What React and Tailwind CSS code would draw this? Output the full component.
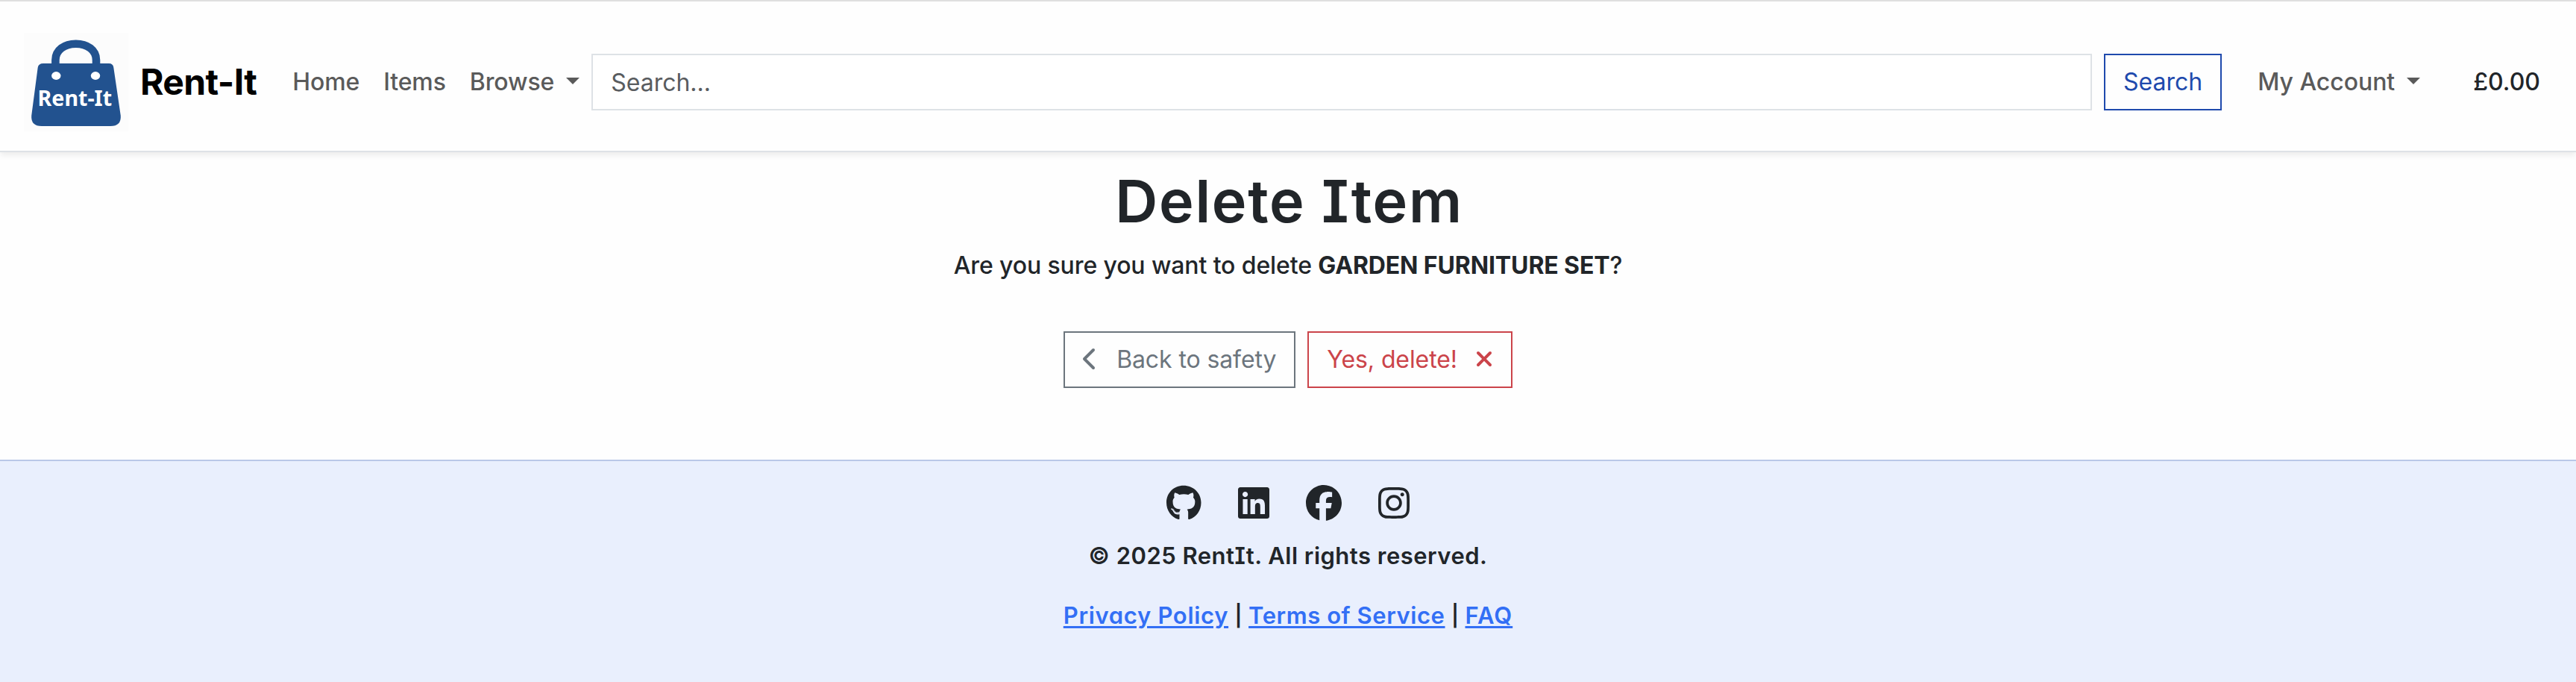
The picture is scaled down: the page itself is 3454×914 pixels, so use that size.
import React from "react";
import { FaGithub, FaLinkedin, FaFacebook, FaInstagram, FaChevronLeft, FaXmark } from "react-icons/fa6";

function Logo() {
  return (
    <svg viewBox="0 0 140 132" className="h-[132px] w-[140px] shrink-0 bg-[#fcfcfc]">
      <path d="M42.4 44V36.5C42.4 23 54.5 14.8 69.7 14.8S97 23 97 36.5V44" fill="none" stroke="#22528f" strokeWidth="10.6" />
      <path d="M26 41H114Q119.6 41 120.3 46.5L129.8 111Q130.8 125 116 125H24Q9.2 125 10.2 111L18.7 46.5Q19.6 41 26 41Z" fill="#22528f" />
      <ellipse cx="43.3" cy="57.5" rx="6.2" ry="5.4" fill="#fff" />
      <ellipse cx="96" cy="57.5" rx="6.2" ry="5.4" fill="#fff" />
      <text x="18.6" y="97.8" textLength="99.5" lengthAdjust="spacingAndGlyphs" fill="#fff" className="font-['Noto_Sans',sans-serif] text-[28.5px] font-bold">Rent-It</text>
    </svg>
  );
}

function Caret() {
  return <span className="-mt-[3px] h-0 w-0 border-x-[9.6px] border-t-[9.6px] border-x-transparent border-t-[#5a5a5a]" />;
}

function Navbar() {
  return (
    <nav className="flex h-[204px] items-center border-t-2 border-b-2 border-t-[#dfdfdf] border-b-[#dee2e6] bg-[#fefefe] pt-4 pr-12 pl-8 font-medium text-[#5a5a5a] shadow-[0_4px_8px_rgba(0,0,0,0.075)]">
      <a className="flex items-center gap-4 text-5xl font-bold text-black">
        <Logo />
        <span className="tracking-[-0.6px]">Rent-It</span>
      </a>
      <div className="ml-12 flex items-center gap-8 tracking-[-0.12px]">
        <a>Home</a>
        <a>Items</a>
        <a className="flex items-center gap-4">Browse <Caret /></a>
      </div>
      <form className="ml-4 flex grow gap-4 font-normal">
        <input placeholder="Search..." className="h-[76px] w-0 grow border-2 border-[#dee2e6] bg-white px-6 placeholder:text-[#595c5f]" />
        <button type="button" className="h-[76px] border-2 border-[#1f4aad] px-6 text-[#1f4aad]">Search</button>
      </form>
      <a className="ml-12 flex items-center gap-4 tracking-[-0.05px]">My Account <Caret /></a>
      <span className="ml-[71px] text-[#212529]">£0.00</span>
    </nav>
  );
}

const serifedCaps = "[font-feature-settings:'cv08','cv11']";

function Footer() {
  return (
    <footer className={serifedCaps + " flex grow flex-col items-center border-t-2 border-[#b9c8e8] bg-[#e9effd] pt-8 text-[31px] font-semibold"}>
      <div className="flex items-center gap-[49px]">
        <FaGithub className="h-12 w-[46.5px]" />
        <FaLinkedin className="h-12 w-[42px]" />
        <FaFacebook className="h-12 w-12" />
        <FaInstagram className="h-12 w-[42px]" />
      </div>
      <p className="mt-[23px] tracking-[0.48px]">© 2025 RentIt. All rights reserved.</p>
      <p className="mt-8 flex items-center text-[#336ff5]">
        <a className="tracking-[0.68px] underline decoration-[3px] underline-offset-[3px]">Privacy Policy</a>
        <span className="w-[27px] text-center text-[28px] text-[#212529]">|</span>
        <a className="tracking-[0.56px] underline decoration-[3px] underline-offset-[3px]">Terms of Service</a>
        <span className="w-[27px] text-center text-[28px] text-[#212529]">|</span>
        <a className="tracking-[1px] underline decoration-[3px] underline-offset-[3px]">FAQ</a>
      </p>
    </footer>
  );
}

export default function App() {
  return (
    <div className="flex h-[914px] flex-col bg-[#fefefe] font-['Inter',sans-serif] text-[32px] leading-[48px] text-[#212529]">
      <Navbar />
      <main className="flex h-[412px] flex-col items-center pt-[17px]">
        <h1 className={serifedCaps + " pl-[3px] text-[79px] leading-[96px] font-semibold tracking-[1.7px]"}>Delete Item</h1>
        <p className="mt-[15px] font-medium tracking-[-0.12px]">
          Are you sure you want to delete <strong className="font-bold">GARDEN FURNITURE SET</strong>?
        </p>
        <div className="mt-16 flex gap-4">
          <a className="flex h-[76px] items-center gap-[25px] border-2 border-[#6c757d] px-6 tracking-[-0.1px] text-[#6c757d]">
            <FaChevronLeft className="-mt-[2px] h-8 w-5" />Back to safety
          </a>
          <a className="flex h-[76px] items-center gap-6 border-2 border-[#cb444a] px-6 tracking-[-0.1px] text-[#cb444a]">
            Yes, delete!<FaXmark className="-mt-[2px] h-8 w-6" />
          </a>
        </div>
      </main>
      <Footer />
    </div>
  );
}
